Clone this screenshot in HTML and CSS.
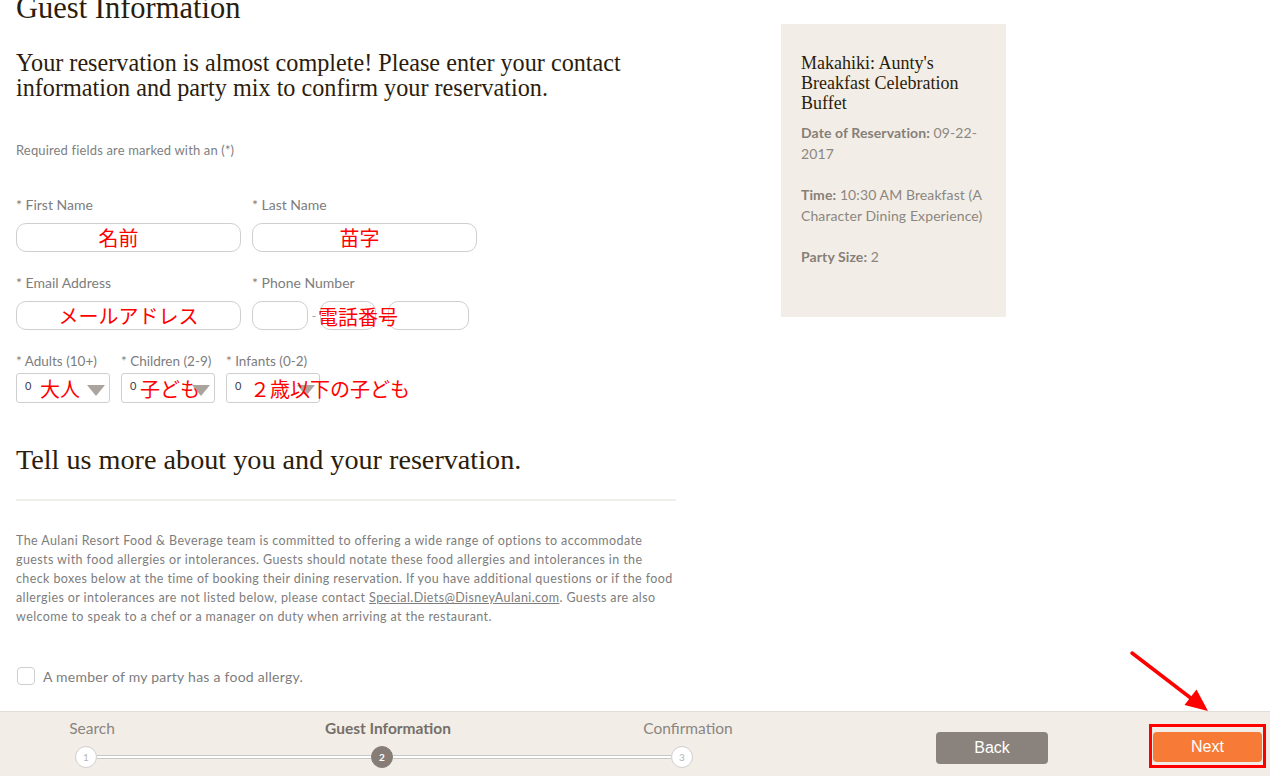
FILE: index.html
```html
<!DOCTYPE html>
<html lang="en">
<head>
<meta charset="utf-8">
<title>Guest Information</title>
<link rel="stylesheet" href="styles.css">
</head>
<body>
<div class="page">
  <main class="main">
    <h1 class="title">Guest Information</h1>
    <p class="intro">Your reservation is almost complete! Please enter your contact information and party mix to confirm your reservation.</p>
    <p class="required">Required fields are marked with an (*)</p>

    <div class="row">
      <div class="group">
        <div class="label">* First Name</div>
        <div class="field wide"><span class="anno shift-l">名前</span></div>
      </div>
      <div class="group">
        <div class="label">* Last Name</div>
        <div class="field wide"><span class="anno shift-s">苗字</span></div>
      </div>
    </div>

    <div class="row">
      <div class="group">
        <div class="label">* Email Address</div>
        <div class="field wide"><span class="anno">メールアドレス</span></div>
      </div>
      <div class="group">
        <div class="label">* Phone Number</div>
        <div class="phone">
          <div class="field p1"></div>
          <span class="dash">-</span>
          <div class="field p2"></div>
          <span class="dash hidden">-</span>
          <div class="field p3"></div>
          <span class="anno phone-anno">電話番号</span>
        </div>
      </div>
    </div>

    <div class="row party">
      <div class="group">
        <div class="label">* Adults (10+)</div>
        <div class="select"><span class="zero">0</span><span class="caret"></span><span class="anno sel-anno a1">大人</span></div>
      </div>
      <div class="group">
        <div class="label">* Children (2-9)</div>
        <div class="select"><span class="zero">0</span><span class="caret"></span><span class="anno sel-anno a2">子ども</span></div>
      </div>
      <div class="group">
        <div class="label">* Infants (0-2)</div>
        <div class="select"><span class="zero">0</span><span class="caret"></span><span class="anno sel-anno a3">２歳以下の子ども</span></div>
      </div>
    </div>

    <h2 class="subtitle">Tell us more about you and your reservation.</h2>
    <hr class="rule">
    <p class="info">The Aulani Resort Food &amp; Beverage team is committed to offering a wide range of options to accommodate guests with food allergies or intolerances. Guests should notate these food allergies and intolerances in the check boxes below at the time of booking their dining reservation. If you have additional questions or if the food allergies or intolerances are not listed below, please contact <a class="mail" href="#">Special.Diets@DisneyAulani.com</a>. Guests are also welcome to speak to a chef or a manager on duty when arriving at the restaurant.</p>

    <label class="check"><span class="box"></span><span>A member of my party has a food allergy.</span></label>
  </main>

  <aside class="card">
    <h3 class="card-title">Makahiki: Aunty's Breakfast Celebration Buffet</h3>
    <p class="card-line"><b>Date of Reservation:</b> 09-22-2017</p>
    <p class="card-line"><b>Time:</b> 10:30 AM Breakfast (A Character Dining Experience)</p>
    <p class="card-line"><b>Party Size:</b> 2</p>
  </aside>
</div>

<footer class="footer">
  <div class="stepper">
    <div class="step">
      <span class="step-label">Search</span>
      <span class="dot">1</span>
    </div>
    <div class="track t1"></div>
    <div class="step">
      <span class="step-label active">Guest Information</span>
      <span class="dot active">2</span>
    </div>
    <div class="track t2"></div>
    <div class="step">
      <span class="step-label">Confirmation</span>
      <span class="dot">3</span>
    </div>
  </div>
  <div class="actions">
    <button class="btn back">Back</button>
    <div class="highlight"><button class="btn next">Next</button></div>
  </div>
</footer>

<svg class="arrow" width="100" height="80" viewBox="0 0 100 80">
  <line x1="12" y1="13" x2="72" y2="59" stroke="#ff0000" stroke-width="3.5" stroke-linecap="round"/>
  <polygon points="88,71 64.5,65 76.5,49.5" fill="#ff0000"/>
</svg>
</body>
</html>
```

FILE: styles.css
```css
html, body {
  margin: 0;
  padding: 0;
  background: #ffffff;
}
body {
  font-family: Lato, "Noto Sans", sans-serif;
  color: #7b7b7b;
  overflow: hidden;
  height: 776px;
}
.page {
  display: flex;
  align-items: flex-start;
  padding-left: 16px;
}
.main {
  width: 660px;
  flex: none;
}
.title {
  font-family: "Liberation Serif", serif;
  font-weight: normal;
  font-size: 30.5px;
  line-height: 30px;
  color: #2b1c0c;
  margin: -7px 0 0 0;
}
.intro {
  font-family: "Liberation Serif", serif;
  font-size: 24.2px;
  line-height: 25px;
  color: #2b1c0c;
  margin: 27px 0 0 0;
}
.required {
  font-size: 13px;
  line-height: 16px;
  letter-spacing: 0.15px;
  margin: 42px 0 0 0;
  color: #808080;
}
.row {
  display: flex;
  gap: 11px;
  margin-top: 39px;
}
.row + .row {
  margin-top: 23px;
}
.group {
  display: flex;
  flex-direction: column;
}
.label {
  font-size: 14px;
  line-height: 16px;
  color: #7d7d7d;
  margin-bottom: 10px;
}
.field {
  position: relative;
  box-sizing: border-box;
  height: 29px;
  border: 1px solid #cfcfcf;
  border-radius: 10px;
  background: #fff;
  display: flex;
  align-items: center;
  justify-content: center;
}
.field.wide {
  width: 225px;
}
.anno {
  font-family: "Noto Sans CJK JP", sans-serif;
  font-size: 20px;
  line-height: 24px;
  color: #ff0000;
  white-space: nowrap;
}
.shift-l {
  margin-right: 20px;
}
.shift-s {
  margin-right: 10px;
}
.phone {
  position: relative;
  display: flex;
  align-items: center;
}
.field.p1 { width: 56px; }
.field.p2 { width: 56px; }
.field.p3 { width: 81px; }
.dash {
  width: 12px;
  text-align: center;
  font-size: 12px;
  color: #999;
}
.dash.hidden { visibility: hidden; }
.phone-anno {
  position: absolute;
  left: 66px;
  top: 4px;
}
.party {
  gap: 11px;
}
.party .label {
  font-size: 13.5px;
  margin-bottom: 4px;
}
.select {
  position: relative;
  box-sizing: border-box;
  width: 94px;
  height: 30px;
  border: 1px solid #cfcfcf;
  border-radius: 3px;
  background: #fff;
}
.zero {
  position: absolute;
  left: 8px;
  top: 5px;
  font-size: 11px;
  color: #3b3b4a;
}
.caret {
  position: absolute;
  right: 4px;
  top: 11px;
  width: 0;
  height: 0;
  border-left: 9px solid transparent;
  border-right: 9px solid transparent;
  border-top: 11px solid #aba49e;
}
.sel-anno {
  position: absolute;
  top: 3px;
}
.a1 { left: 23px; }
.a2 { left: 18px; }
.a3 { left: 23px; }
.subtitle {
  font-family: "Liberation Serif", serif;
  font-weight: normal;
  font-size: 28.2px;
  line-height: 30px;
  color: #2b1c0c;
  margin: 42px 0 0 0;
}
.rule {
  border: none;
  height: 2px;
  background: #eeeeea;
  margin: 24px 0 0 0;
}
.info {
  font-size: 12.5px;
  line-height: 19px;
  letter-spacing: 0.4px;
  color: #7d7d7d;
  margin: 30px 0 0 0;
}
.mail {
  color: #7d7d7d;
  text-decoration: underline;
}
.check {
  display: flex;
  align-items: center;
  gap: 8px;
  margin-top: 41px;
  margin-left: 1px;
  font-size: 14px;
  letter-spacing: 0.25px;
  color: #7d7d7d;
}
.box {
  box-sizing: border-box;
  width: 18px;
  height: 18px;
  border: 1px solid #cfcfcf;
  border-radius: 4px;
  background: #fff;
}
.card {
  box-sizing: border-box;
  width: 225px;
  height: 293px;
  margin-left: 105px;
  margin-top: 24px;
  padding: 29px 18px 0 20px;
  background: #f2eee7;
  flex: none;
}
.card-title {
  font-family: "Liberation Serif", serif;
  font-weight: normal;
  font-size: 18px;
  line-height: 20px;
  color: #2b1c0c;
  margin: 0 0 9px 0;
}
.card-line {
  font-size: 14px;
  line-height: 21px;
  letter-spacing: 0.1px;
  color: #8c8680;
  margin: 0 0 20px 0;
}
.card-line b {
  font-weight: bold;
  color: #877f78;
}
.footer {
  position: fixed;
  left: 0;
  right: 0;
  bottom: 0;
  height: 64px;
  border-top: 1px solid #e2ded7;
  background: #f2eee7;
  display: flex;
  align-items: flex-start;
  padding-right: 4px;
}
.stepper {
  display: flex;
  align-items: flex-end;
  padding-left: 75px;
  padding-top: 6px;
}
.step {
  width: 22px;
  display: flex;
  flex-direction: column;
  align-items: center;
}
.step-label {
  white-space: nowrap;
  font-size: 15.5px;
  line-height: 20px;
  color: #8a8580;
  margin-bottom: 8px;
  position: relative;
  left: 6px;
}
.step-label.active {
  font-weight: bold;
  color: #766f69;
}
.dot {
  box-sizing: border-box;
  width: 22px;
  height: 22px;
  border-radius: 50%;
  border: 1px solid #cfcfcf;
  background: #fff;
  font-size: 10px;
  line-height: 20px;
  text-align: center;
  color: #b5b5b5;
}
.dot.active {
  background: #857d76;
  border-color: #857d76;
  color: #fff;
  font-weight: bold;
}
.track {
  box-sizing: border-box;
  height: 4px;
  margin-bottom: 9px;
  background: #fff;
  border-top: 1px solid #c8c8c8;
  border-bottom: 1px solid #c8c8c8;
}
.t1 { width: 274px; }
.t2 { width: 278px; }
.actions {
  margin-left: auto;
  display: flex;
  align-items: flex-start;
}
.btn {
  font-family: "Liberation Sans", Arial, sans-serif;
  font-size: 16px;
  color: #fff;
  border: none;
  border-radius: 4px;
  cursor: pointer;
}
.back {
  width: 112px;
  height: 32px;
  margin-top: 20px;
  margin-right: 101px;
  background: #8a837d;
}
.highlight {
  margin-top: 12px;
  border: 3px solid #ff0000;
  padding: 5px 1px 3px 1px;
}
.next {
  display: block;
  width: 109px;
  height: 30px;
  background: #f77b36;
}
.arrow {
  position: fixed;
  left: 1120px;
  top: 640px;
  z-index: 5;
}
```
